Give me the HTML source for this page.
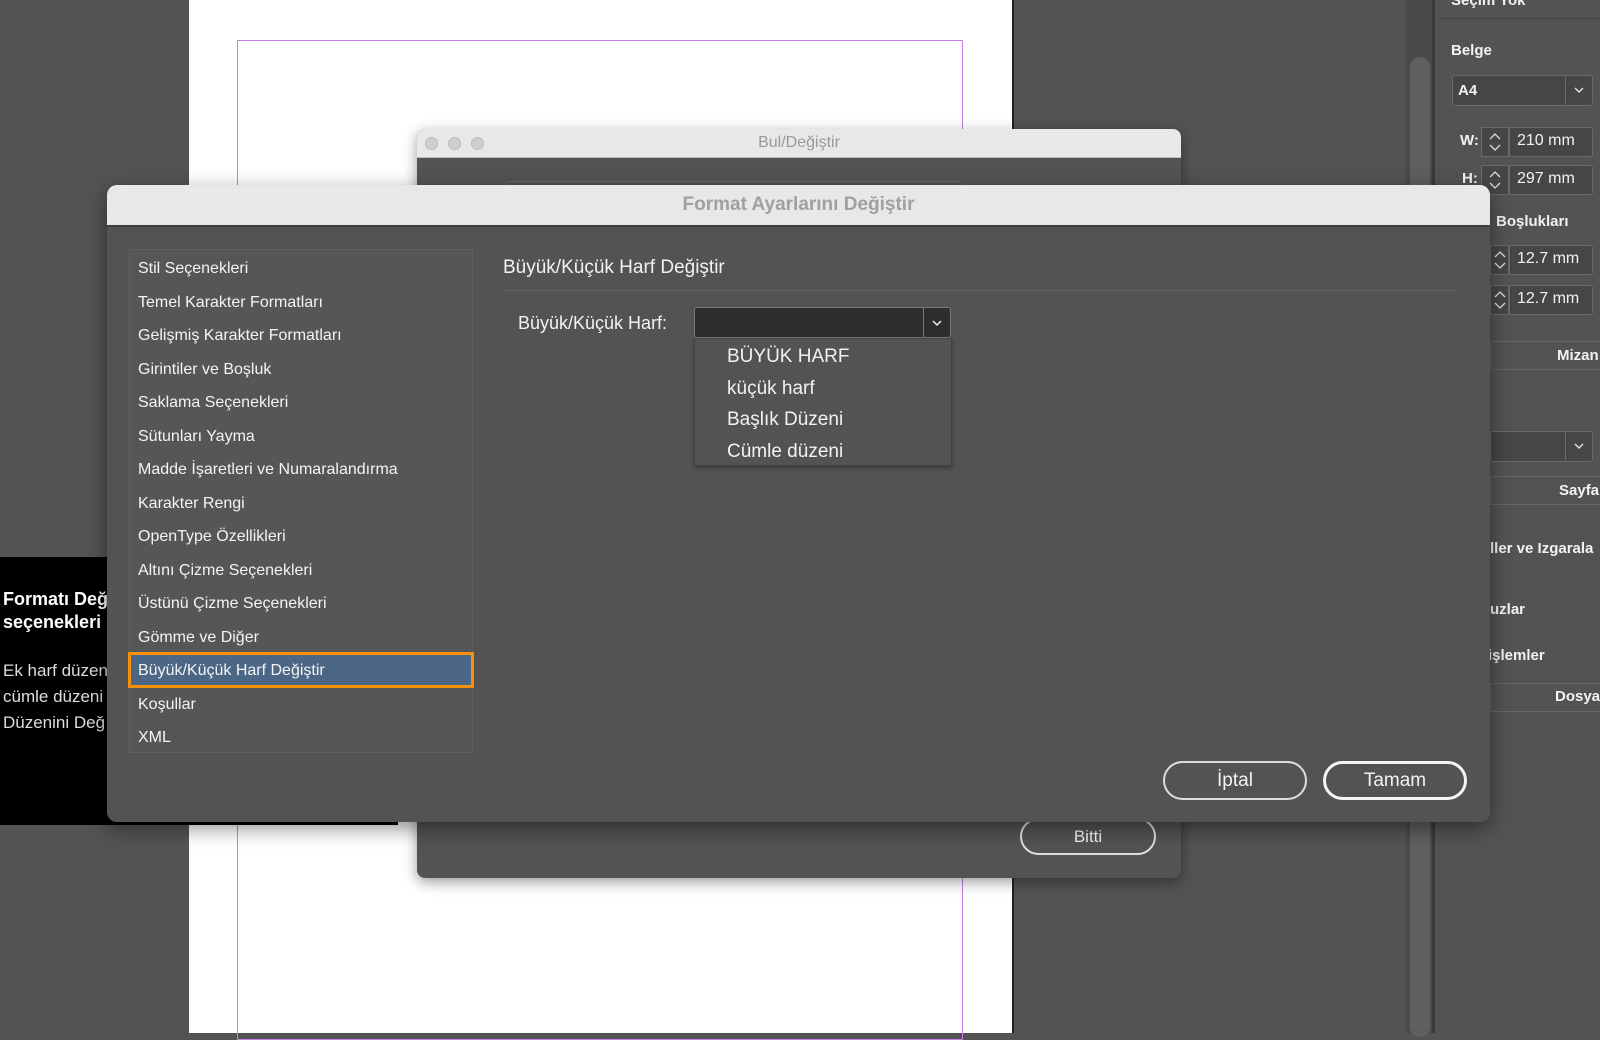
<!DOCTYPE html>
<html><head><meta charset="utf-8"><style>
*{margin:0;padding:0;box-sizing:border-box}
body{width:1600px;height:1033px;overflow:hidden;background:#535353;position:relative;font-family:"Liberation Sans",sans-serif;color:#f2f2f2}
.abs{position:absolute}
.t{position:absolute;white-space:nowrap}
.sp{position:absolute;background:#464646;border:1px solid #6a6a6a}
.sp svg{position:absolute;left:50%;top:50%;transform:translate(-50%,-50%)}
</style></head><body>
<!-- page -->
<div class="abs" style="left:189px;top:0;width:823px;height:1033px;background:#fff"></div>
<div class="abs" style="left:237px;top:40px;width:726px;height:1000px;border:1px solid #c77ee8"></div>
<div class="abs" style="left:1012px;top:0;width:2px;height:1033px;background:#222"></div>
<!-- scrollbar -->
<div class="abs" style="left:1406px;top:0;width:28px;height:1033px;background:#4a4a4a"></div>
<div class="abs" style="left:1410px;top:57px;width:20px;height:980px;background:#5f5f5f;border-radius:10px"></div>
<div class="abs" style="left:1432px;top:0;width:3px;height:1033px;background:#3a3a3a"></div>
<!-- right panel -->
<div class="abs" style="left:1435px;top:0;width:165px;height:1033px;background:#535353"></div>
<div class="t" style="left:1451px;top:-8px;font-size:15px;font-weight:bold">Seçim Yok</div>
<div class="abs" style="left:1440px;top:18px;width:160px;height:1px;background:#444"></div>
<div class="t" style="left:1451px;top:42px;font-size:15px;font-weight:bold">Belge</div>
<div class="abs" style="left:1452px;top:75px;width:141px;height:31px;background:#464646;border:1px solid #6a6a6a;border-radius:3px"></div>
<div class="abs" style="left:1565px;top:75px;width:1px;height:31px;background:#6a6a6a"></div>
<div class="t" style="left:1458px;top:82px;font-size:15px;font-weight:bold">A4</div>
<svg class="abs" style="left:1573px;top:86px" width="12" height="8"><path d="M2 2l4 4 4-4" stroke="#ddd" stroke-width="1.5" fill="none"/></svg>
<div class="t" style="left:1460px;top:132px;font-size:15px;font-weight:bold">W:</div>
<div class="sp" style="left:1481px;top:127px;width:28px;height:30px"><svg width="14" height="22"><path d="M2 8l5-5 5 5M2 14l5 5 5-5" stroke="#ddd" stroke-width="1.3" fill="none"/></svg></div>
<div class="abs" style="left:1509px;top:127px;width:84px;height:30px;background:#464646;border:1px solid #6a6a6a;border-radius:3px"></div>
<div class="t" style="left:1517px;top:132px;font-size:16px">210 mm</div>
<div class="t" style="left:1462px;top:170px;font-size:15px;font-weight:bold">H:</div>
<div class="sp" style="left:1481px;top:165px;width:28px;height:30px"><svg width="14" height="22"><path d="M2 8l5-5 5 5M2 14l5 5 5-5" stroke="#ddd" stroke-width="1.3" fill="none"/></svg></div>
<div class="abs" style="left:1509px;top:165px;width:84px;height:30px;background:#464646;border:1px solid #6a6a6a;border-radius:3px"></div>
<div class="t" style="left:1517px;top:170px;font-size:16px">297 mm</div>
<div class="sp" style="left:1490px;top:245px;width:19px;height:30px"><svg width="14" height="22"><path d="M2 8l5-5 5 5M2 14l5 5 5-5" stroke="#ddd" stroke-width="1.3" fill="none"/></svg></div>
<div class="abs" style="left:1509px;top:245px;width:84px;height:30px;background:#464646;border:1px solid #6a6a6a;border-radius:3px"></div>
<div class="t" style="left:1517px;top:250px;font-size:16px">12.7 mm</div>
<div class="sp" style="left:1490px;top:285px;width:19px;height:30px"><svg width="14" height="22"><path d="M2 8l5-5 5 5M2 14l5 5 5-5" stroke="#ddd" stroke-width="1.3" fill="none"/></svg></div>
<div class="abs" style="left:1509px;top:285px;width:84px;height:30px;background:#464646;border:1px solid #6a6a6a;border-radius:3px"></div>
<div class="t" style="left:1517px;top:290px;font-size:16px">12.7 mm</div>
<div class="t" style="left:1496px;top:213px;font-size:15px;font-weight:bold">Boşlukları</div>
<div class="abs" style="left:1490px;top:341px;width:110px;height:29px;border:1px solid #666;border-right:none;border-radius:3px 0 0 3px"></div>
<div class="t" style="left:1557px;top:347px;font-size:15px;font-weight:bold">Mizan</div>
<div class="abs" style="left:1490px;top:431px;width:103px;height:31px;background:#464646;border:1px solid #6a6a6a;border-radius:3px"></div>
<div class="abs" style="left:1565px;top:431px;width:1px;height:31px;background:#6a6a6a"></div>
<svg class="abs" style="left:1573px;top:442px" width="12" height="8"><path d="M2 2l4 4 4-4" stroke="#ddd" stroke-width="1.5" fill="none"/></svg>
<div class="abs" style="left:1490px;top:476px;width:110px;height:29px;border:1px solid #666;border-right:none"></div>
<div class="t" style="left:1559px;top:482px;font-size:15px;font-weight:bold">Sayfa</div>
<div class="t" style="left:1490px;top:540px;font-size:15px;font-weight:bold">ller ve Izgarala</div>
<div class="t" style="left:1490px;top:601px;font-size:15px;font-weight:bold">uzlar</div>
<div class="t" style="left:1488px;top:647px;font-size:15px;font-weight:bold">işlemler</div>
<div class="abs" style="left:1490px;top:683px;width:110px;height:29px;border:1px solid #666;border-right:none"></div>
<div class="t" style="left:1555px;top:688px;font-size:15px;font-weight:bold">Dosya</div>
<!-- black panel -->
<div class="abs" style="left:0;top:557px;width:398px;height:268px;background:#000"></div>
<div class="t" style="left:3px;top:588px;font-size:18px;font-weight:bold;line-height:23px;color:#fff">Formatı Değiştir<br>seçenekleri</div>
<div class="t" style="left:3px;top:658px;font-size:17px;line-height:26px;color:#ddd">Ek harf düzeni<br>cümle düzeni<br>Düzenini Değ</div>
<!-- Bul window -->
<div class="abs" style="left:417px;top:129px;width:764px;height:749px;background:#535353;border-radius:8px;box-shadow:0 4px 14px rgba(0,0,0,.4);overflow:hidden">
 <div style="height:29px;background:#e8e8e8;border-bottom:1px solid #bbb;position:relative">
  <div class="abs" style="left:8px;top:8px;width:13px;height:13px;border-radius:50%;background:#cfcfcf;border:1px solid #bbb"></div>
  <div class="abs" style="left:31px;top:8px;width:13px;height:13px;border-radius:50%;background:#cfcfcf;border:1px solid #bbb"></div>
  <div class="abs" style="left:54px;top:8px;width:13px;height:13px;border-radius:50%;background:#cfcfcf;border:1px solid #bbb"></div>
  <div class="t" style="left:0;width:764px;text-align:center;top:5px;font-size:16px;color:#9a9a9a">Bul/Değiştir</div>
 </div>
 <div class="abs" style="left:89px;top:52px;width:455px;height:30px;border:1px solid #666;border-radius:3px"></div>
 <div class="abs" style="left:603px;top:689px;width:136px;height:37px;border:2px solid #ddd;border-radius:19px;text-align:center;font-size:17px;line-height:33px">Bitti</div>
</div>
<!-- Format dialog -->
<div class="abs" style="left:107px;top:185px;width:1383px;height:637px;background:#535353;border-radius:10px;box-shadow:0 6px 20px rgba(0,0,0,.45);overflow:hidden">
 <div style="height:42px;background:#e8e8e8;border-bottom:2px solid #3c3c3c;text-align:center;font-size:19px;font-weight:bold;color:#a0a0a0;line-height:40px">Format Ayarlarını Değiştir</div>
 <div class="abs" style="left:22px;top:64px;width:344px;height:504px;border:1px solid #5f5f5f;background:#565656"></div>
 <div class="abs" style="left:21px;top:467px;width:346px;height:36px;border:3px solid #f7900a;background:#4b6785"></div>
 <div class="t" style="left:31px;top:67px;font-size:16px;line-height:33.5px;color:#f4f4f4">Stil Seçenekleri<br>Temel Karakter Formatları<br>Gelişmiş Karakter Formatları<br>Girintiler ve Boşluk<br>Saklama Seçenekleri<br>Sütunları Yayma<br>Madde İşaretleri ve Numaralandırma<br>Karakter Rengi<br>OpenType Özellikleri<br>Altını Çizme Seçenekleri<br>Üstünü Çizme Seçenekleri<br>Gömme ve Diğer<br>Büyük/Küçük Harf Değiştir<br>Koşullar<br>XML</div>
 <div class="t" style="left:396px;top:72px;font-size:19px">Büyük/Küçük Harf Değiştir</div>
 <div class="abs" style="left:396px;top:105px;width:956px;height:1px;background:#626262"></div>
 <div class="t" style="left:411px;top:128px;font-size:18px">Büyük/Küçük Harf:</div>
 <div class="abs" style="left:587px;top:122px;width:257px;height:31px;background:#2e2e2e;border:1px solid #777;border-radius:3px"></div>
 <div class="abs" style="left:816px;top:122px;width:1px;height:31px;background:#777"></div>
 <svg class="abs" style="left:824px;top:134px" width="12" height="8"><path d="M2 2l4 4 4-4" stroke="#eee" stroke-width="1.5" fill="none"/></svg>
 <div class="abs" style="left:587px;top:153px;width:258px;height:128px;background:#535353;border:1px solid #444;box-shadow:0 2px 4px rgba(0,0,0,.3)"></div>
 <div class="t" style="left:620px;top:156px;font-size:19px;line-height:31.7px">BÜYÜK HARF<br>küçük harf<br>Başlık Düzeni<br>Cümle düzeni</div>
 <div class="abs" style="left:1056px;top:576px;width:144px;height:39px;border:2px solid #ddd;border-radius:20px;text-align:center;font-size:19px;line-height:35px">İptal</div>
 <div class="abs" style="left:1216px;top:576px;width:144px;height:39px;border:3px solid #f4f4f4;border-radius:20px;text-align:center;font-size:19px;line-height:33px">Tamam</div>
</div>
</body></html>
